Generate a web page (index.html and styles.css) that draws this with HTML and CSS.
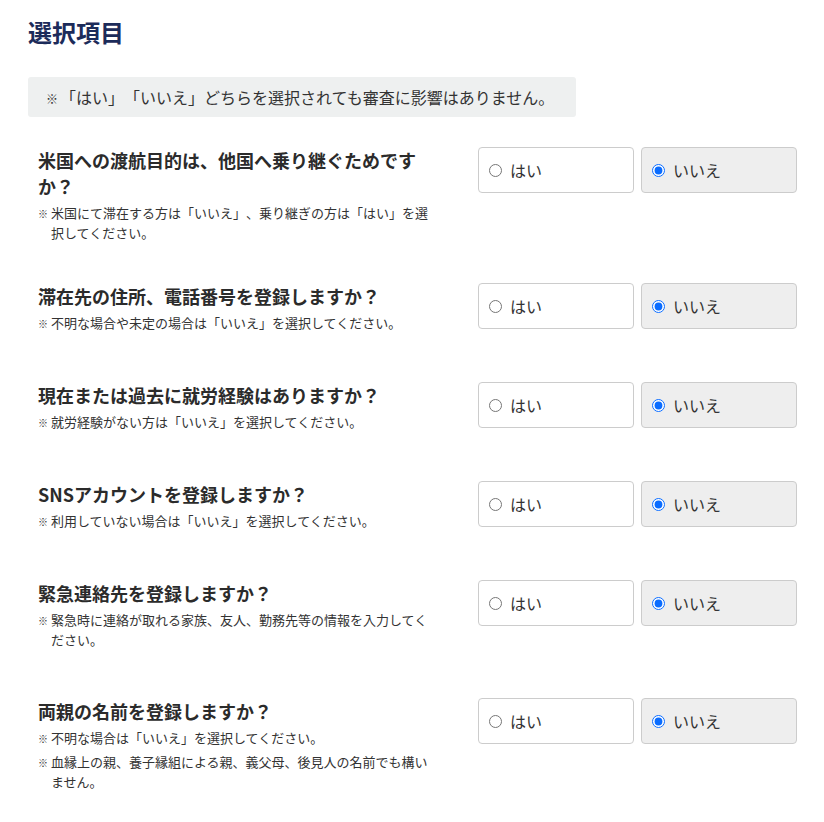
FILE: index.html
```html
<!DOCTYPE html>
<html lang="ja">
<head>
<meta charset="utf-8">
<title>選択項目</title>
<link rel="stylesheet" href="styles.css">
</head>
<body>
<main class="page">
  <h1 class="title">選択項目</h1>
  <p class="notice"><span class="mark">※</span>「はい」「いいえ」どちらを選択されても審査に影響はありません。</p>

  <section class="row row-first">
    <div class="question">
      <h2 class="q-text">米国への渡航目的は、他国へ乗り継ぐためですか？</h2>
      <ul class="notes">
        <li>米国にて滞在する方は「いいえ」、乗り継ぎの方は「はい」を選択してください。</li>
      </ul>
    </div>
    <div class="choices">
      <label class="choice"><input type="radio" name="q1"><span>はい</span></label>
      <label class="choice is-checked"><input type="radio" name="q1" checked><span>いいえ</span></label>
    </div>
  </section>

  <section class="row">
    <div class="question">
      <h2 class="q-text">滞在先の住所、電話番号を登録しますか？</h2>
      <ul class="notes">
        <li>不明な場合や未定の場合は「いいえ」を選択してください。</li>
      </ul>
    </div>
    <div class="choices">
      <label class="choice"><input type="radio" name="q2"><span>はい</span></label>
      <label class="choice is-checked"><input type="radio" name="q2" checked><span>いいえ</span></label>
    </div>
  </section>

  <section class="row">
    <div class="question">
      <h2 class="q-text">現在または過去に就労経験はありますか？</h2>
      <ul class="notes">
        <li>就労経験がない方は「いいえ」を選択してください。</li>
      </ul>
    </div>
    <div class="choices">
      <label class="choice"><input type="radio" name="q3"><span>はい</span></label>
      <label class="choice is-checked"><input type="radio" name="q3" checked><span>いいえ</span></label>
    </div>
  </section>

  <section class="row">
    <div class="question">
      <h2 class="q-text">SNSアカウントを登録しますか？</h2>
      <ul class="notes">
        <li>利用していない場合は「いいえ」を選択してください。</li>
      </ul>
    </div>
    <div class="choices">
      <label class="choice"><input type="radio" name="q4"><span>はい</span></label>
      <label class="choice is-checked"><input type="radio" name="q4" checked><span>いいえ</span></label>
    </div>
  </section>

  <section class="row">
    <div class="question">
      <h2 class="q-text">緊急連絡先を登録しますか？</h2>
      <ul class="notes">
        <li>緊急時に連絡が取れる家族、友人、勤務先等の情報を入力してください。</li>
      </ul>
    </div>
    <div class="choices">
      <label class="choice"><input type="radio" name="q5"><span>はい</span></label>
      <label class="choice is-checked"><input type="radio" name="q5" checked><span>いいえ</span></label>
    </div>
  </section>

  <section class="row">
    <div class="question">
      <h2 class="q-text">両親の名前を登録しますか？</h2>
      <ul class="notes">
        <li>不明な場合は「いいえ」を選択してください。</li>
        <li>血縁上の親、養子縁組による親、義父母、後見人の名前でも構いません。</li>
      </ul>
    </div>
    <div class="choices">
      <label class="choice"><input type="radio" name="q6"><span>はい</span></label>
      <label class="choice is-checked"><input type="radio" name="q6" checked><span>いいえ</span></label>
    </div>
  </section>
</main>
</body>
</html>
```

FILE: styles.css
```css
* { box-sizing: border-box; }

html, body {
  margin: 0;
  padding: 0;
  background: #ffffff;
}

body {
  font-family: "Noto Sans CJK JP", "Noto Sans", sans-serif;
  color: #333333;
  text-spacing-trim: space-all;
}

.page {
  padding: 14px 17px 0 28px;
}

.title {
  margin: 0;
  font-size: 24px;
  line-height: 36px;
  font-weight: 700;
  color: #1c2b5a;
}

.notice {
  margin: 27px 0 0 0;
  width: fit-content;
  height: 40px;
  padding: 0 22px 0 16px;
  line-height: 40px;
  font-size: 16px;
  background: #eef0f0;
  border-radius: 3px;
  color: #333333;
}

.mark {
  display: inline-block;
  width: 16px;
  font-size: 12px;
  text-align: center;
}

.row {
  display: flex;
  justify-content: space-between;
  align-items: flex-start;
  padding: 0 10px;
  margin-top: 49px;
}

.row-first {
  margin-top: 30px;
  margin-bottom: -8px;
}

.question {
  width: 392px;
}

.q-text {
  margin: 0;
  font-size: 18px;
  line-height: 26px;
  font-weight: 700;
  color: #2b2b2b;
}

.notes {
  list-style: none;
  margin: 4px 0 0 0;
  padding: 0;
  font-size: 13px;
  line-height: 19px;
  color: #333333;
}

.notes li {
  padding-left: 13px;
}

.notes li + li {
  margin-top: 4px;
}

.notes li::before {
  content: "※";
  display: inline-block;
  width: 13px;
  margin-left: -13px;
  font-size: 10px;
}

.choices {
  display: flex;
  gap: 7px;
}

.choice {
  display: flex;
  align-items: center;
  gap: 8px;
  width: 156px;
  height: 46px;
  padding: 0 10px;
  border: 1px solid #cccccc;
  border-radius: 4px;
  background: #ffffff;
  font-size: 16px;
  color: #333333;
}

.choice.is-checked {
  background: #eeeeee;
}

.choice input {
  margin: 0;
  width: 13px;
  height: 13px;
  accent-color: #0a6cff;
}
```
